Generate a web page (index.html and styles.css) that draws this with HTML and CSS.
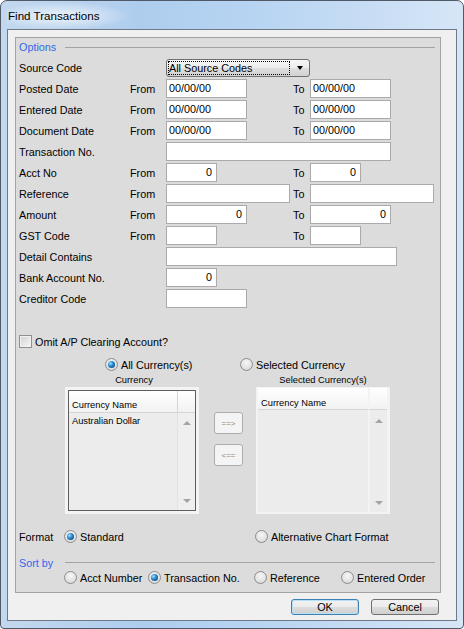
FILE: index.html
```html
<!DOCTYPE html>
<html>
<head>
<meta charset="utf-8">
<title>Find Transactions</title>
<link rel="stylesheet" href="styles.css">
</head>
<body>
<div class="window">
  <div class="titlebar"><span class="title">Find Transactions</span></div>
  <div class="client">
    <div class="group">
      <div class="legend"><span class="legend-text">Options</span><span class="legend-line"></span></div>
      <div class="form">
        <span class="lbl">Source Code</span><span></span>
        <div class="select rest"><span class="select-text">All Source Codes</span><span class="select-arrow"></span></div>

        <span class="lbl">Posted Date</span><span class="lbl">From</span>
        <div class="field w81">00/00/00</div><span class="lbl">To</span><div class="field w81">00/00/00</div>

        <span class="lbl">Entered Date</span><span class="lbl">From</span>
        <div class="field w81">00/00/00</div><span class="lbl">To</span><div class="field w81">00/00/00</div>

        <span class="lbl">Document Date</span><span class="lbl">From</span>
        <div class="field w81">00/00/00</div><span class="lbl">To</span><div class="field w81">00/00/00</div>

        <span class="lbl">Transaction No.</span><span></span>
        <div class="field rest w225"></div>

        <span class="lbl">Acct No</span><span class="lbl">From</span>
        <div class="field w51 num">0</div><span class="lbl">To</span><div class="field w51 num">0</div>

        <span class="lbl">Reference</span><span class="lbl">From</span>
        <div class="field w124"></div><span class="lbl">To</span><div class="field w124"></div>

        <span class="lbl">Amount</span><span class="lbl">From</span>
        <div class="field w81 num">0</div><span class="lbl">To</span><div class="field w81 num">0</div>

        <span class="lbl">GST Code</span><span class="lbl">From</span>
        <div class="field w51"></div><span class="lbl">To</span><div class="field w51"></div>

        <span class="lbl">Detail Contains</span><span></span>
        <div class="field rest w231"></div>

        <span class="lbl">Bank Account No.</span><span></span>
        <div class="field rest w51 num">0</div>

        <span class="lbl">Creditor Code</span><span></span>
        <div class="field rest w81"></div>
      </div>

      <div class="check-row"><span class="checkbox"></span><span>Omit A/P Clearing Account?</span></div>

      <div class="cur-radios">
        <div class="opt cur-all"><span class="radio on"></span><span>All Currency(s)</span></div>
        <div class="opt"><span class="radio"></span><span>Selected Currency</span></div>
      </div>

      <div class="cur-labels">
        <span class="cur-label left">Currency</span>
        <span class="cur-label right">Selected Currency(s)</span>
      </div>

      <div class="lists">
        <div class="list-left">
          <div class="list-inner">
            <div class="list-head">Currency Name</div>
            <div class="list-head-end"></div>
            <div class="list-body"><div class="list-item">Australian Dollar</div></div>
            <div class="scroll"><span class="arr-up"></span><span class="arr-down"></span></div>
          </div>
        </div>
        <div class="move-btns">
          <div class="move">==&gt;</div>
          <div class="move">&lt;==</div>
        </div>
        <div class="list-right">
          <div class="list-inner2">
            <div class="list-head2">Currency Name</div>
            <div class="list-head2-end"></div>
            <div class="list-body2"></div>
            <div class="scroll2"><span class="arr-up"></span><span class="arr-down"></span></div>
          </div>
        </div>
      </div>

      <div class="format-row">
        <span class="fmt-label">Format</span>
        <div class="opt fmt-std"><span class="radio on"></span><span>Standard</span></div>
        <div class="opt"><span class="radio"></span><span>Alternative Chart Format</span></div>
      </div>

      <div class="legend sort-legend"><span class="legend-text">Sort by</span><span class="legend-line"></span></div>

      <div class="sort-row">
        <div class="opt s1"><span class="radio"></span><span>Acct Number</span></div>
        <div class="opt s2"><span class="radio on"></span><span>Transaction No.</span></div>
        <div class="opt s3"><span class="radio"></span><span>Reference</span></div>
        <div class="opt"><span class="radio"></span><span>Entered Order</span></div>
      </div>
    </div>

    <div class="buttons">
      <div class="btn btn-default">OK</div>
      <div class="btn">Cancel</div>
    </div>
  </div>
</div>
</body>
</html>
```

FILE: styles.css
```css
html, body {
  margin: 0;
  padding: 0;
  background: #ffffff;
}

body {
  font-family: "Liberation Sans", Arial, sans-serif;
  font-size: 10.8px;
  color: #000;
}

.window {
  box-sizing: border-box;
  width: 464px;
  height: 629px;
  border: 1px solid #4f5968;
  border-radius: 7px 7px 4px 4px;
  background: linear-gradient(90deg, #c3d8ee 0%, #aecdee 30%, #b7d4f2 55%, #c8ddf4 80%, #d6e6f7 100%);
  padding: 0 6px 7px 6px;
  display: flex;
  flex-direction: column;
}

.titlebar {
  height: 28px;
  display: flex;
  align-items: center;
  padding-left: 1px;
  background: radial-gradient(ellipse 70px 14px at 55px 15px, rgba(255,255,255,0.75), rgba(255,255,255,0) 100%);
}

.title {
  font-size: 11.6px;
  color: #000;
}

.client {
  flex: 1;
  border: 1px solid #6f7985;
  background: #f0f0f0;
  padding: 7px 0 0 7px;
  display: flex;
  flex-direction: column;
}

.group {
  box-sizing: border-box;
  width: 426px;
  height: 556px;
  border: 1px solid #a3a3a3;
  background: #dcdcdc;
  padding: 0 0 0 3px;
}

.legend {
  height: 18px;
  display: flex;
  align-items: center;
  color: #3366ee;
}

.legend-text {
  flex: 0 0 46px;
}

.legend-line {
  flex: 1;
  height: 1px;
  background: #a3a3a3;
  margin-right: 5px;
}

.form {
  margin-top: 1px;
  display: grid;
  grid-template-columns: 111px 36px 127px 17px 1fr;
  grid-auto-rows: 21px;
  align-items: center;
}

.lbl {
  white-space: nowrap;
}

.field {
  box-sizing: border-box;
  height: 19px;
  border: 1px solid #aaaaaa;
  background: #fff;
  padding: 0 2px;
  line-height: 17px;
  white-space: nowrap;
}

.num {
  text-align: right;
  padding-right: 4px;
}

.rest {
  grid-column: 3 / 6;
  justify-self: start;
}

.w51 { width: 51px; }
.w81 { width: 81px; }
.w124 { width: 124px; }
.w225 { width: 225px; }
.w231 { width: 231px; }

.select {
  box-sizing: border-box;
  width: 144px;
  height: 18px;
  border: 1px solid #707070;
  border-radius: 3px;
  background: linear-gradient(#f6f6f6 0%, #ececec 50%, #dfdfdf 51%, #d2d2d2 100%);
  display: flex;
  align-items: center;
  padding: 0 1px;
}

.select-text {
  box-sizing: border-box;
  flex: 0 0 122px;
  height: 14px;
  line-height: 12px;
  border: 1px dotted #000;
  padding-left: 0;
  white-space: nowrap;
  overflow: hidden;
}

.select-arrow {
  width: 0;
  height: 0;
  margin-left: 7px;
  border-left: 3.5px solid transparent;
  border-right: 3.5px solid transparent;
  border-top: 4px solid #000;
}

.check-row {
  margin-top: 25px;
  height: 15px;
  display: flex;
  align-items: center;
  gap: 3px;
}

.checkbox {
  box-sizing: border-box;
  flex: none;
  width: 13px;
  height: 13px;
  border: 1px solid #8e8f8f;
  background: linear-gradient(135deg, #d0d0d0 0%, #e9e9e9 60%, #f6f6f6 100%);
  box-shadow: inset 0 0 0 1px #f2f2f2;
}

.opt {
  display: flex;
  align-items: center;
  gap: 3px;
  white-space: nowrap;
}

.radio {
  box-sizing: border-box;
  flex: none;
  width: 13px;
  height: 13px;
  border-radius: 50%;
  border: 1px solid #8b8c8c;
  background: radial-gradient(circle at 50% 35%, #f6f6f6 0%, #e4e4e4 55%, #cfcfcf 100%);
  display: flex;
  align-items: center;
  justify-content: center;
}

.radio.on::after {
  content: "";
  width: 7px;
  height: 7px;
  border-radius: 50%;
  background: radial-gradient(circle at 35% 35%, #9be3ff 0%, #2d8bd0 40%, #10568f 75%, #0b3a66 100%);
}

.cur-radios {
  margin-top: 8px;
  height: 15px;
  display: flex;
  align-items: center;
  padding-left: 86px;
}

.cur-all {
  flex: 0 0 135px;
}

.cur-labels {
  margin-top: 1px;
  height: 14px;
  line-height: 14px;
  display: flex;
  padding-left: 46px;
  font-size: 9.3px;
}

.cur-label {
  box-sizing: border-box;
  width: 134px;
  text-align: center;
  white-space: nowrap;
}

.cur-label.left {
  padding-left: 4px;
}

.cur-label.right {
  margin-left: 57px;
}

.lists {
  height: 127px;
  display: flex;
  padding-left: 46px;
  font-size: 9.3px;
}

.list-left {
  box-sizing: border-box;
  width: 134px;
  height: 127px;
  background: #f4f4f4;
  padding: 3px;
}

.list-inner {
  box-sizing: border-box;
  height: 100%;
  border: 1px solid #5e5e5e;
  background: #ececec;
  display: grid;
  grid-template-columns: 1fr 17px;
  grid-template-rows: 22px 1fr;
}

.list-head, .list-head2 {
  background: linear-gradient(#ffffff, #f2f2f2);
  border-bottom: 1px solid #d5d5d5;
  border-right: 1px solid #d5d5d5;
  display: flex;
  align-items: flex-end;
  padding: 0 0 2px 3px;
  white-space: nowrap;
}

.list-head2 {
  padding-bottom: 1px;
}

.list-head-end, .list-head2-end {
  background: linear-gradient(#ffffff, #f2f2f2);
  border-bottom: 1px solid #d5d5d5;
}

.list-body {
  border-right: 1px solid #e2e2e2;
  padding: 3px 0 0 3px;
}

.list-item {
  white-space: nowrap;
}

.scroll, .scroll2 {
  background: #efefef;
  display: flex;
  flex-direction: column;
  align-items: center;
  justify-content: space-between;
  padding: 8px 0 7px 0;
}

.arr-up {
  width: 0;
  height: 0;
  border-left: 4px solid transparent;
  border-right: 4px solid transparent;
  border-bottom: 4px solid #a4a4a4;
}

.arr-down {
  width: 0;
  height: 0;
  border-left: 4px solid transparent;
  border-right: 4px solid transparent;
  border-top: 4px solid #a4a4a4;
}

.move-btns {
  margin-left: 15px;
  padding-top: 25px;
  display: flex;
  flex-direction: column;
  gap: 10px;
}

.move {
  box-sizing: border-box;
  width: 29px;
  height: 22px;
  border: 1px solid #acacac;
  border-radius: 3px;
  background: #f4f4f4;
  font-size: 8px;
  color: #9a8270;
  display: flex;
  align-items: center;
  justify-content: center;
}

.list-right {
  box-sizing: border-box;
  margin-left: 13px;
  width: 134px;
  height: 127px;
  background: #f3f3f3;
  padding: 1px 3px 2px 2px;
}

.list-inner2 {
  box-sizing: border-box;
  height: 100%;
  background: #ececec;
  display: grid;
  grid-template-columns: 1fr 17px;
  grid-template-rows: 22px 1fr;
}

.list-head2 {
  border-right: 2px solid #f3f3f3;
}

.list-body2 {
  border-right: 2px solid #f3f3f3;
}

.scroll2 {
  background: #ececec;
  padding: 9px 0 7px 0;
}

.format-row {
  margin-top: 15px;
  height: 15px;
  display: flex;
  align-items: center;
}

.fmt-label {
  flex: 0 0 45px;
}

.fmt-std {
  flex: 0 0 191px;
}

.sort-legend {
  margin-top: 11px;
  height: 15px;
}

.sort-row {
  height: 15px;
  display: flex;
  align-items: center;
  padding-left: 45px;
}

.s1 { flex: 0 0 84px; }
.s2 { flex: 0 0 106px; }
.s3 { flex: 0 0 87px; }

.buttons {
  margin-top: 6px;
  height: 16px;
  display: flex;
  justify-content: flex-end;
  gap: 12px;
  padding-right: 17px;
}

.btn {
  box-sizing: border-box;
  width: 68px;
  height: 16px;
  border: 1px solid #707070;
  border-radius: 3px;
  background: linear-gradient(#f2f2f2 0%, #ebebeb 50%, #dddddd 51%, #cfcfcf 100%);
  display: flex;
  align-items: center;
  justify-content: center;
}

.btn-default {
  border-color: #3c7fb1;
  box-shadow: inset 0 0 0 1px #b8e1f8;
}
```
